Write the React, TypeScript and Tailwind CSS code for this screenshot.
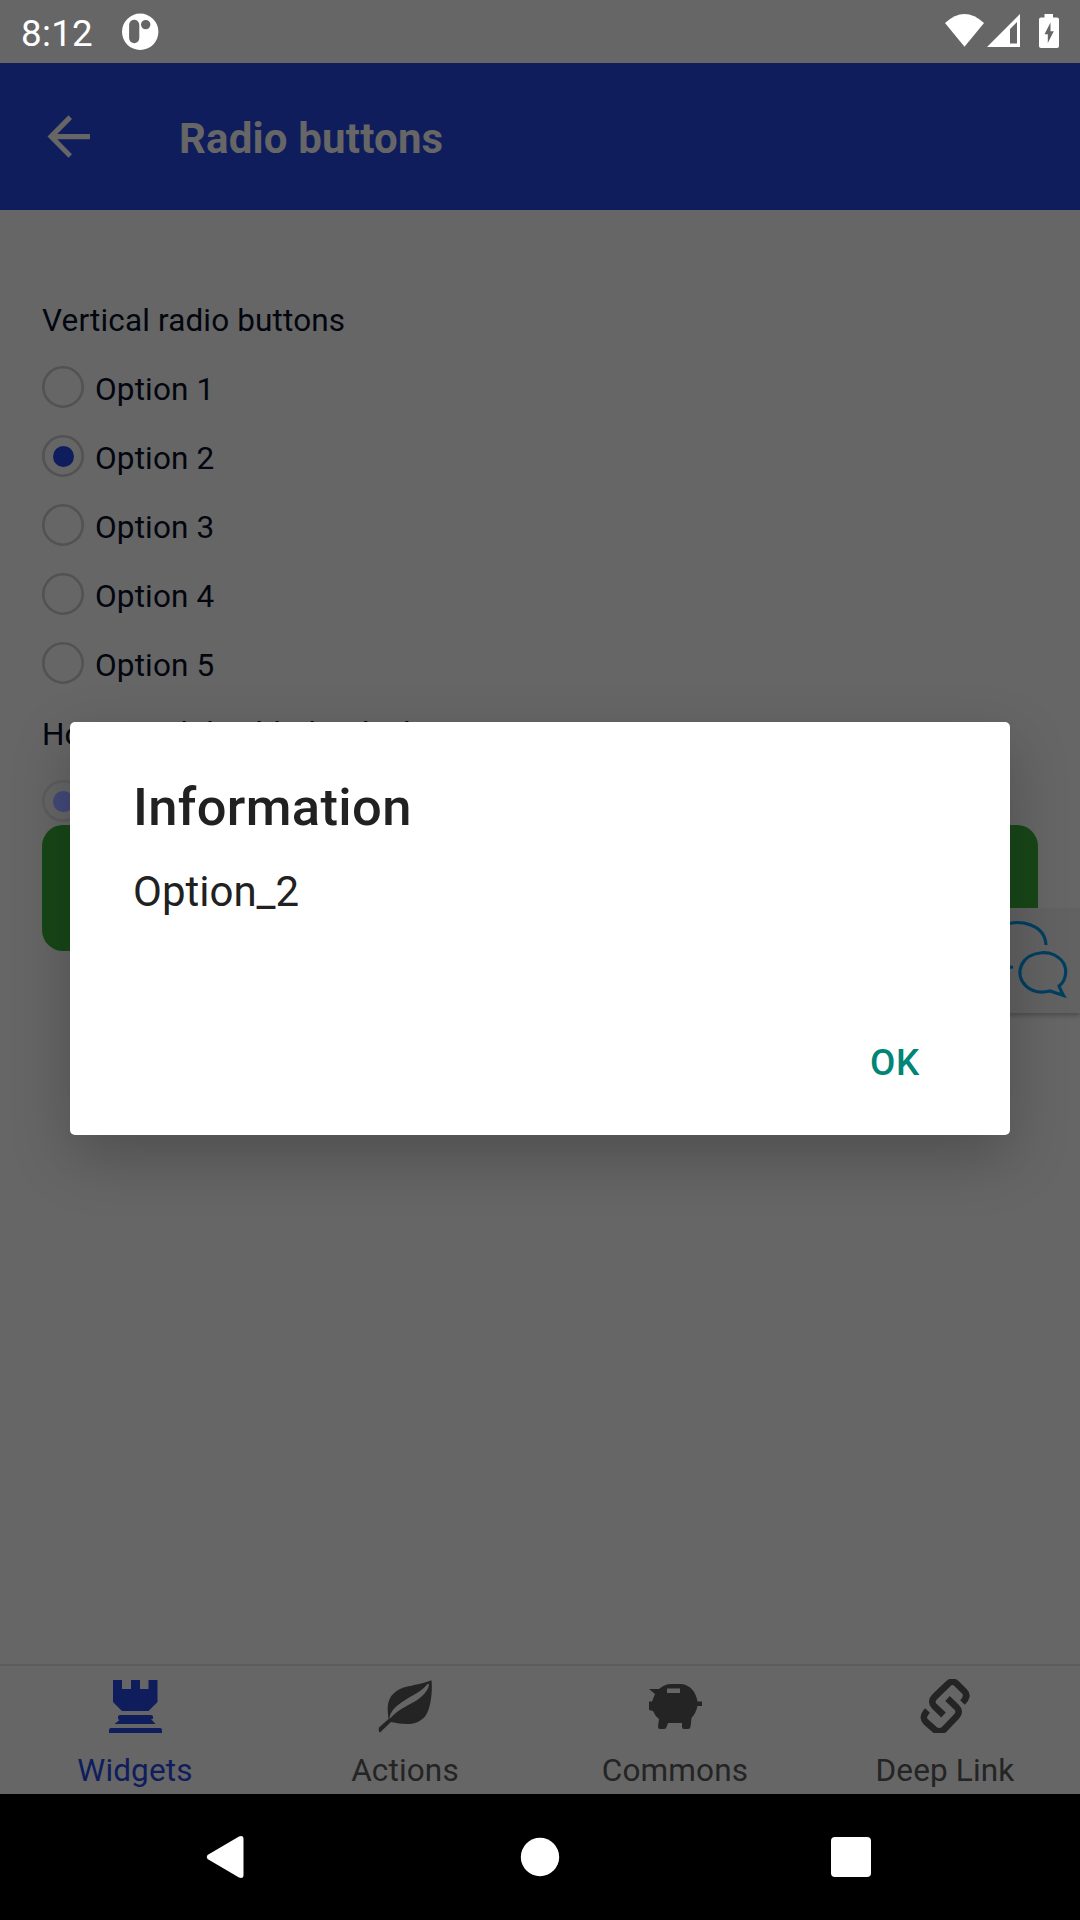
import React from "react";

function StatusBar() {
  return (
    <div className="flex h-[63px] shrink-0 items-start justify-between bg-[#666666] text-white">
      <div className="flex items-start">
        <span className="ml-[21px] mt-[12px] w-[74px] text-[36.75px] leading-[44px] tracking-[0.3px]">8:12</span>
        <svg className="ml-[26px] mt-[13px] h-[38px] w-[38px]" viewBox="0 0 38 38">
          <path
            fill="white"
            fillRule="evenodd"
            d="M19.200 0.600a18.200 18.200 0 1 1 0 36.400a18.200 18.200 0 1 1 0-36.400Z M13.200 6.800a5.100 5.100 0 0 0-5.100 5.100v13.200a5.100 5.100 0 0 0 10.200 0V11.900A5.100 5.100 0 0 0 13.200 6.800Z M24.700 6.900a4.700 4.700 0 1 0 0 9.400a4.700 4.700 0 1 0 0-9.400Z"
          />
        </svg>
      </div>
      <svg className="h-[63px] w-[140px]" viewBox="940 0 140 63" fill="white">
        <path d="M945 23Q964.500 5 984 23L964.500 46.800Z" />
        <path fillRule="evenodd" d="M1020 14V47H987ZM1017 22L1010 29V43.500H1017Z" />
        <path
          fillRule="evenodd"
          d="M1044.500 14H1053V17.500H1057Q1059 17.500 1059 19.500V46Q1059 48 1057 48H1041Q1039 48 1039 46V19.500Q1039 17.500 1041 17.500H1044.500ZM1050.500 22.500L1044.500 34.300H1047.800V43L1053.800 31.200H1050.500Z"
        />
      </svg>
    </div>
  );
}

function Radio({ checked = false, disabled = false }: { checked?: boolean; disabled?: boolean }) {
  return (
    <svg className="h-[42px] w-[42px] shrink-0" viewBox="0 0 42 42">
      <circle cx="21" cy="21" r="19.700" fill="none" strokeWidth="2.600" stroke={disabled ? "#5d5d5d" : "#525252"} />
      {checked && <circle cx="21.500" cy="21.500" r="10.500" fill={disabled ? "#43497a" : "#0f1d5c"} />}
    </svg>
  );
}

function Tab({ label, color, children }: { label: string; color: string; children: React.ReactNode }) {
  return (
    <div className={"flex flex-1 flex-col items-center " + color}>
      <svg className="mt-[13px] h-[54px] w-[54px]" viewBox="0 0 54 54" fill="currentColor">
        {children}
      </svg>
      <span className="mt-[18px] text-[31.5px] leading-[40px] tracking-[0.15px]">{label}</span>
    </div>
  );
}

export default function App() {
  return (
    <div className="relative flex h-[1920px] w-[1080px] flex-col overflow-hidden bg-[#666666] font-[Roboto,sans-serif]">
      <StatusBar />

      <header className="flex h-[147px] shrink-0 items-center bg-[#0f1d5c] text-[#666666]">
        <svg className="ml-[47px] h-[43px] w-[43px]" viewBox="0 0 43 43" fill="currentColor">
          <path d="M43 18.900V24.200H10.300L25 39.200L21.500 42.800L0.500 21.500L21.500 0.300L25 3.900L10.300 18.900Z" />
        </svg>
        <h1 className="ml-[89px] mt-[4px] text-[42px] font-bold leading-[50px] tracking-[0.17px]">Radio buttons</h1>
      </header>

      <main className="flex flex-1 flex-col px-[42px] pt-[91px] text-[31.5px] tracking-[0.15px] text-[#03060f]">
        <p className="h-[65px] leading-[40px]">Vertical radio buttons</p>
        {[1, 2, 3, 4, 5].map((n) => (
          <div key={n} className="flex h-[69px] items-start">
            <Radio checked={n === 2} />
            <span className="ml-[11px] mt-[4px] leading-[40px]">Option {n}</span>
          </div>
        ))}
        <p className="mt-[4px] h-[65px] leading-[40px]">
          Ho<span className="relative -top-px">rizontal disabled radio buttons</span>
        </p>
        <div className="h-[45px]">
          <Radio checked disabled />
        </div>
        <div className="h-[126px] rounded-[21px] bg-[#184718]" />
      </main>

      <nav className="flex h-[130px] shrink-0 border-t-2 border-[#5c5c5c]">
        <Tab label="Widgets" color="text-[#0f1d5c]">
          <path d="M5 1H14V10H23V1H32V10H40.500V1H49.500V23L40.500 32H14L5 23Z" />
          <path d="M12 36H43Q45 36 45 38V40H43L47.500 45H6.500L11.500 41L10 40V38Q10 36 12 36ZM3 49H52Q54 49 54 51V54H1V51Q1 49 3 49Z" />
        </Tab>
        <Tab label="Actions" color="text-[#242424]">
          <path
            fillRule="evenodd"
            d="M53.500 1.300C54.500 10 53.500 29 47 37.500C38 47.500 26 45.500 13 43L2 53.500Q0 52.500 1 48.500L10.500 40C9 29 8 17 22 10C32 6 42 6 53.500 1.300ZM49.500 5C43 14 31 17 20 26C15 30 11.500 35 11.500 40C23 27 34 26 43 18Q51 11 51 5Z"
          />
        </Tab>
        <Tab label="Commons" color="text-[#242424]">
          <path
            fillRule="evenodd"
            d="M1 10H11Q17 5 23 5H32C42 5 48 13 49.500 22.500H54V27H49.500Q48 34 43.500 39L42.500 48Q42 50 40 50H36Q34 50 34 47.500V44H20L18.500 48Q18 50 16 50H12Q10 50 10 47.500L11 40Q7 37 5 32L1 31V22.500H4L7 15ZM19 9.500V14H32V9.500Z"
          />
        </Tab>
        <Tab label="Deep Link" color="text-[#242424]">
          <g fill="none" stroke="currentColor" strokeWidth="6.600">
            <path d="M44.500 23.500C49 19 49.500 15.500 46.500 12.500L39 5C36 2 32.500 2 30 5L16.500 18C13.500 21 13.500 24.500 16.500 27.500L25.500 36" />
            <path d="M9.500 31.500C5 36.500 4.500 39.500 8 43L16.500 50.500C19.500 53 23 53 26 50.500L38.500 37.500C41.500 34.500 41.500 31 38.500 28L29.500 19.500" />
          </g>
        </Tab>
      </nav>

      <footer className="h-[126px] shrink-0 bg-black">
        <svg className="h-[126px] w-[1080px]" viewBox="0 0 1080 126" fill="white">
          <path d="M207.500 61Q206 63 207.500 65L239 83.500Q243.500 85 243.500 81V45Q243.500 41 239 42.500Z" />
          <circle cx="540" cy="63" r="19.200" />
          <rect x="831" y="43" width="40" height="40" rx="4" />
        </svg>
      </footer>

      <aside className="absolute left-[960px] top-[908px] h-[105px] w-[120px] bg-[#626262] shadow-[0_3px_4px_rgba(0,0,0,0.22)]">
        <svg className="h-[105px] w-[120px]" viewBox="960 908 120 105" fill="none" stroke="#003f61" strokeWidth="3.200">
          <path d="M1000 927C1020 917 1045 925 1046 945M1000 966Q1006 968 1013 967" />
          <path d="M1059 986C1066 981 1067.500 970 1063.500 963C1054 948 1029 950 1021.500 965C1015 981 1030 996 1050 991L1063.500 995.500Q1061 991 1059 986Z" />
        </svg>
      </aside>

      <section
        role="dialog"
        className="absolute left-[70px] top-[722px] flex h-[413px] w-[940px] flex-col rounded-[5px] bg-white px-[63px] text-[#212121] shadow-[0_22px_60px_rgba(0,0,0,0.23)]"
      >
        <h2 className="mt-[54px] text-[52.5px] font-medium leading-[62px] tracking-[0.35px]">Information</h2>
        <p className="mt-[29px] text-[42px] leading-[50px]">Option_2</p>
        <button className="mr-[27px] mt-[124px] self-end text-[36.75px] font-medium leading-[44px] tracking-[0.7px] text-[#008577]">
          OK
        </button>
      </section>
    </div>
  );
}
